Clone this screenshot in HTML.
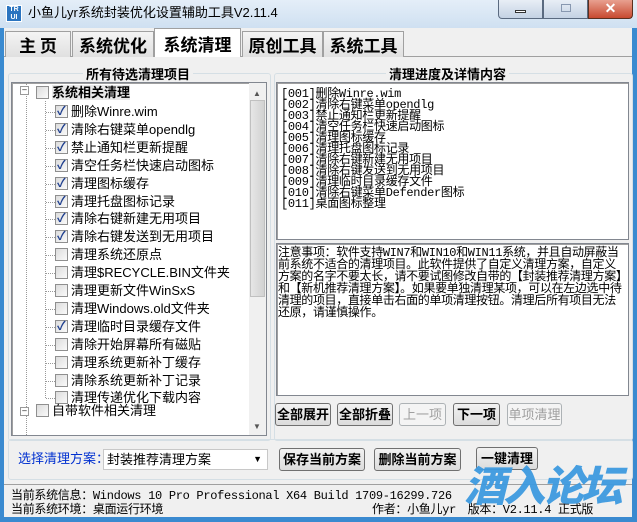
<!DOCTYPE html>
<html><head><meta charset="utf-8">
<style>
*{margin:0;padding:0;box-sizing:border-box}
body{width:637px;height:522px;overflow:hidden;background:#3a8ad0;font-family:"Liberation Sans","Noto Sans CJK SC",sans-serif;font-size:12px;color:#000;position:relative}
.a{position:absolute}
.title{left:0;top:0;width:637px;height:28px;background:linear-gradient(#e4eef8,#cfe0f1)}
.win{left:4px;top:28px;width:628px;height:489px;background:#f0f0f0}
.tab{top:31px;height:26px;border:1px solid #a0a0a0;border-bottom:none;background:linear-gradient(#f4f4f4,#e0e0e0);font-weight:bold;font-size:17px;text-align:center;line-height:26px;font-family:"Noto Sans CJK SC",sans-serif}
.grp{border:1px solid #d5dfe5;border-radius:3px}
.gt{background:#f0f0f0;font-weight:bold;font-size:13px;padding:0 3px;font-family:"WenQuanYi Zen Hei","Noto Sans CJK SC",sans-serif}
.box{background:#fff;border:1px solid #828790;box-shadow:inset 1px 1px 0 #a0a0a0}
.mono{font-family:"WenQuanYi Zen Hei","Liberation Mono",monospace;font-size:12px;line-height:11px;letter-spacing:-0.3px}
.it{left:0;height:18px;line-height:18px;font-size:13px;white-space:nowrap}
.cb{position:absolute;top:2px;width:13px;height:13px;border:1px solid #8f8f8f;background:linear-gradient(135deg,#dcdcdc,#fafafa)}
.cb.c::after{content:"✓";position:absolute;left:1px;top:-4px;font-size:12px;color:#1f3f8f;font-weight:bold}
.btn{height:23px;border:1px solid #707070;border-radius:3px;background:linear-gradient(#f2f2f2,#dcdcdc);font-weight:bold;font-size:13px;text-align:center;line-height:21px}
.dis{color:#a0a0a0;border-color:#adb2b5;background:#f4f4f4;font-weight:normal}
</style></head><body>
<div class="a title"></div>
<div class="a" style="left:6px;top:5px;width:16px;height:17px;background:#2a74c0;border:1px solid #fff;color:#fff;font-size:7px;line-height:8px;text-align:center;font-weight:bold">TR<br>UI</div>
<div class="a" style="left:28px;top:3px;font-size:13px;line-height:20px">小鱼儿yr系统封装优化设置辅助工具V2.11.4</div>
<div class="a" style="left:498px;top:0;width:45px;height:19px;border:1px solid #5a6a80;border-top:none;border-radius:0 0 0 4px;background:linear-gradient(#e8eef6,#c4d2e4)"><div class="a" style="left:16px;top:10px;width:11px;height:3px;border:1px solid #333;background:#fff"></div></div>
<div class="a" style="left:543px;top:0;width:45px;height:19px;border:1px solid #5a6a80;border-top:none;background:linear-gradient(#e8eef6,#c4d2e4)"><div class="a" style="left:17px;top:4px;width:10px;height:8px;border:1px solid #8898b0"></div></div>
<div class="a" style="left:588px;top:0;width:45px;height:19px;border:1px solid #5a3020;border-top:none;border-radius:0 0 4px 0;background:linear-gradient(#e8a090,#c84a30);color:#fff;font-weight:bold;font-size:14px;text-align:center;line-height:17px">✕</div>
<div class="a win"></div>
<div class="a" style="left:4px;top:56px;width:628px;height:1px;background:#a0a0a0"></div>
<div class="a tab" style="left:5px;width:66px">主 页</div>
<div class="a tab" style="left:72px;width:82px">系统优化</div>
<div class="a tab" style="left:154px;top:28px;height:29px;width:87px;background:#fff;line-height:29px">系统清理</div>
<div class="a tab" style="left:242px;width:81px">原创工具</div>
<div class="a tab" style="left:323px;width:81px">系统工具</div>

<div class="a grp" style="left:8px;top:73px;width:263px;height:368px"></div>
<div class="a gt" style="left:83px;top:64px">所有待选清理项目</div>
<div class="a grp" style="left:274px;top:73px;width:359px;height:368px"></div>
<div class="a gt" style="left:386px;top:64px">清理进度及详情内容</div>

<div class="a box" style="left:11px;top:82px;width:256px;height:354px;overflow:hidden">
 <div class="a" style="right:0;top:0;width:17px;height:352px;background:#f0f0f0">
  <div class="a" style="left:4px;top:6px;font-size:8px;color:#555">▲</div>
  <div class="a" style="left:1px;top:17px;width:15px;height:197px;background:linear-gradient(90deg,#e6e6e6,#d2d2d2);border:1px solid #c0c0c0"></div>
  <div class="a" style="left:4px;bottom:4px;font-size:8px;color:#555">▼</div>
 </div>
 <div class="a" style="left:14px;top:0;width:0;height:352px;border-left:1px dotted #999"></div>
 <div class="a" style="left:33px;top:18px;width:0;height:297px;border-left:1px dotted #999"></div>
 <div class="a" style="left:8px;top:3px;width:9px;height:9px;border:1px solid #999;background:#fff;font-size:8px;line-height:6px;text-align:center">–</div>
 <div class="a" style="left:8px;top:324px;width:9px;height:9px;border:1px solid #999;background:#fff;font-size:8px;line-height:6px;text-align:center">–</div>
 <div class="a it" style="top:1px;left:24px"><span class="cb"></span><span style="margin-left:16px;font-weight:bold;background:#e8e8e8">系统相关清理</span></div>
 <div id="items"></div>
 <div class="a it" style="top:319px;left:24px"><span class="cb"></span><span style="margin-left:16px">自带软件相关清理</span></div>
</div>

<div class="a box mono" style="left:276px;top:82px;width:353px;height:158px;padding:6px 4px">
[001]删除Winre.wim<br>[002]清除右键菜单opendlg<br>[003]禁止通知栏更新提醒<br>[004]清空任务栏快速启动图标<br>[005]清理图标缓存<br>[006]清理托盘图标记录<br>[007]清除右键新建无用项目<br>[008]清除右键发送到无用项目<br>[009]清理临时目录缓存文件<br>[010]清除右键菜单Defender图标<br>[011]桌面图标整理
</div>
<div class="a box mono" style="left:276px;top:243px;width:353px;height:153px;padding:3px 1px;line-height:12px;letter-spacing:-0.35px">
注意事项：软件支持WIN7和WIN10和WIN11系统，并且自动屏蔽当前系统不适合的清理项目。此软件提供了自定义清理方案，自定义方案的名字不要太长，请不要试图修改自带的【封装推荐清理方案】和【新机推荐清理方案】。如果要单独清理某项，可以在左边选中待清理的项目，直接单击右面的单项清理按钮。清理后所有项目无法还原，请谨慎操作。
</div>
<div class="a btn" style="left:275px;top:403px;width:56px">全部展开</div>
<div class="a btn" style="left:337px;top:403px;width:56px">全部折叠</div>
<div class="a btn dis" style="left:399px;top:403px;width:47px">上一项</div>
<div class="a btn" style="left:453px;top:403px;width:47px">下一项</div>
<div class="a btn dis" style="left:507px;top:403px;width:55px">单项清理</div>

<div class="a grp" style="left:8px;top:439px;width:625px;height:41px"></div>
<div class="a" style="left:18px;top:450px;color:#0030d0;font-size:13px;line-height:18px">选择清理方案：</div>
<div class="a" style="left:103px;top:449px;width:165px;height:21px;border:1px solid #c8c8c8;background:#fff;font-size:13px;line-height:19px;padding-left:3px">封装推荐清理方案<span class="a" style="right:5px;top:0;font-size:9px">▼</span></div>
<div class="a btn" style="left:279px;top:448px;width:86px">保存当前方案</div>
<div class="a btn" style="left:374px;top:448px;width:87px">删除当前方案</div>
<div class="a btn" style="left:476px;top:447px;width:62px">一键清理</div>

<div class="a" style="left:4px;top:484px;width:628px;height:1px;background:#a0a0a0"></div>
<div class="a mono" style="left:11px;top:489px;font-size:12px;line-height:14px;white-space:nowrap">当前系统信息：Windows 10 Pro Professional X64 Build 1709-16299.726<br>当前系统环境：桌面运行环境</div>
<div class="a mono" style="left:372px;top:503px;font-size:12px;line-height:14px;white-space:nowrap">作者：小鱼儿yr　版本：V2.11.4 正式版</div>
<div class="a" style="left:464px;top:454px;font-size:42px;font-weight:900;font-style:italic;color:#3d9ae0;letter-spacing:-3px;font-family:'Noto Sans CJK SC',sans-serif;line-height:60px;opacity:.95">酒入论坛</div>

<script>
var n=["删除Winre.wim","清除右键菜单opendlg","禁止通知栏更新提醒","清空任务栏快速启动图标","清理图标缓存","清理托盘图标记录","清除右键新建无用项目","清除右键发送到无用项目","清理系统还原点","清理$RECYCLE.BIN文件夹","清理更新文件WinSxS","清理Windows.old文件夹","清理临时目录缓存文件","清除开始屏幕所有磁贴","清理系统更新补丁缓存","清除系统更新补丁记录","清理传递优化下载内容"];
var h="";n.forEach(function(t,i){var c=(i<8||i==12)?" c":"";var y=20+i*17.9;h+='<div class="a" style="left:34px;top:'+(y+9)+'px;width:9px;border-top:1px dotted #999"></div><div class="a it" style="top:'+y+'px;left:43px"><span class="cb'+c+'"></span><span style="margin-left:16px">'+t+'</span></div>';});
document.getElementById("items").innerHTML=h;
</script>
</body></html>
